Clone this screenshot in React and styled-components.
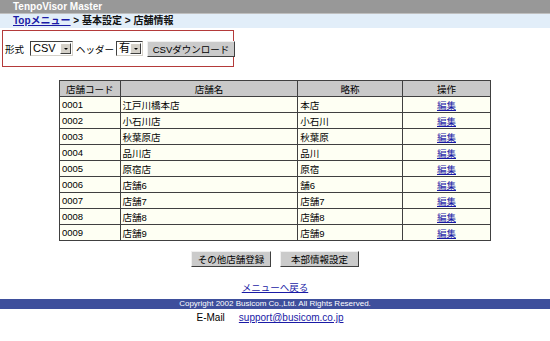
import React from 'react';
import styled, { createGlobalStyle } from 'styled-components';

const GlobalStyle = createGlobalStyle`
  html, body {
    margin: 0;
    padding: 0;
    background: #ffffff;
    font-family: "Liberation Sans", "Noto Sans CJK JP", sans-serif;
    font-size: 10px;
    color: #000;
  }
`;

const Page = styled.div`
  width: 550px;
  height: 341px;
  overflow: hidden;
`;

const TitleBar = styled.div`
  height: 13px;
  background: #989898;
  color: #fff;
  font-weight: bold;
  font-size: 10px;
  line-height: 13px;
  padding-left: 13px;
  border-bottom: 1px solid #bfbfbf;
`;

const Crumbs = styled.div`
  height: 14px;
  background: #e2eef9;
  line-height: 14px;
  padding-left: 13px;
  font-weight: bold;
  font-size: 10px;
  color: #111;
`;

const Link = styled.a`
  color: #1a1aa6;
  text-decoration: underline;
  cursor: pointer;
`;

const ExportBox = styled.div`
  margin: 2px 0 0 2px;
  width: 232px;
  height: 37px;
  border: 1px solid #b43a3a;
  display: flex;
  align-items: center;
  white-space: nowrap;
  padding-left: 2px;
  box-sizing: border-box;
`;

const Label = styled.span`
  font-size: 9.5px;
  flex-shrink: 0;
  margin-right: ${({ mr }) => mr || 0}px;
`;

const FakeSelect = styled.div`
  width: ${({ w }) => w}px;
  height: 15px;
  flex-shrink: 0;
  box-sizing: border-box;
  border: 1px solid #404040;
  border-right-color: #d4d0c8;
  border-bottom-color: #d4d0c8;
  background: #fff;
  display: flex;
  align-items: center;
  justify-content: space-between;
  padding-left: 2px;
  margin-right: ${({ mr }) => mr || 0}px;
  font-size: 11px;
  line-height: 13px;
`;

const Arrow = styled.span`
  width: 11px;
  height: 11px;
  margin-right: 1px;
  background: #d4d0c8;
  border: 1px solid #fff;
  border-right-color: #404040;
  border-bottom-color: #404040;
  box-sizing: border-box;
  display: flex;
  align-items: center;
  justify-content: center;
  &::after {
    content: '';
    border-left: 2px solid transparent;
    border-right: 2px solid transparent;
    border-top: 2px solid #000;
  }
`;

const Button = styled.button`
  width: ${({ w }) => w}px;
  height: 16px;
  flex-shrink: 0;
  padding: 0;
  background: #cbcbcb;
  border: 1px solid;
  border-color: #f0f0f0 #404040 #404040 #f0f0f0;
  font-family: inherit;
  font-size: 9.5px;
  color: #000;
  cursor: pointer;
  white-space: nowrap;
`;

const TableWrap = styled.div`
  display: flex;
  justify-content: center;
  margin-top: 13px;
`;

const Table = styled.table`
  width: 432px;
  border-collapse: collapse;
  border: 1px solid #404040;
  font-size: 9.5px;
`;

const Th = styled.th`
  height: 15px;
  padding: 0;
  background: #c9c9c9;
  border: 1px solid #404040;
  font-weight: normal;
  width: ${({ w }) => w}px;
`;

const Td = styled.td`
  height: 15px;
  padding: 0 2px;
  background: #fefff3;
  border: 1px solid #404040;
  text-align: ${({ center }) => (center ? 'center' : 'left')};
`;

const ButtonRow = styled.div`
  display: flex;
  justify-content: center;
  gap: 9px;
  margin-top: 10px;
`;

const BackLink = styled.div`
  text-align: center;
  margin-top: 13px;
  font-size: 9.5px;
`;

const Footer = styled.div`
  margin-top: 5px;
  height: 10px;
  background: #3e4f9c;
  color: #fff;
  font-size: 8px;
  line-height: 10px;
  text-align: center;
`;

const Mail = styled.div`
  text-align: center;
  margin-top: 3px;
  font-size: 10px;
  padding-right: 10px;
  & > span {
    margin-right: 14px;
  }
`;

const shops = [
  ['0001', '江戸川橋本店', '本店'],
  ['0002', '小石川店', '小石川'],
  ['0003', '秋葉原店', '秋葉原'],
  ['0004', '品川店', '品川'],
  ['0005', '原宿店', '原宿'],
  ['0006', '店舗6', '舗6'],
  ['0007', '店舗7', '店舗7'],
  ['0008', '店舗8', '店舗8'],
  ['0009', '店舗9', '店舗9'],
];

export default function App() {
  return (
    <Page>
      <GlobalStyle />
      <TitleBar>TenpoVisor Master</TitleBar>
      <Crumbs>
        <Link>Topメニュー</Link> &gt; 基本設定 &gt; 店舗情報
      </Crumbs>
      <ExportBox>
        <Label mr={6}>形式</Label>
        <FakeSelect w={43} mr={3}>
          CSV
          <Arrow />
        </FakeSelect>
        <Label mr={2}>ヘッダー</Label>
        <FakeSelect w={27} mr={4}>
          有
          <Arrow />
        </FakeSelect>
        <Button w={88}>CSVダウンロード</Button>
      </ExportBox>
      <TableWrap>
        <Table>
          <thead>
            <tr>
              <Th w={60}>店舗コード</Th>
              <Th w={179}>店舗名</Th>
              <Th w={105}>略称</Th>
              <Th w={88}>操作</Th>
            </tr>
          </thead>
          <tbody>
            {shops.map(([code, name, abbr]) => (
              <tr key={code}>
                <Td>{code}</Td>
                <Td>{name}</Td>
                <Td>{abbr}</Td>
                <Td center>
                  <Link>編集</Link>
                </Td>
              </tr>
            ))}
          </tbody>
        </Table>
      </TableWrap>
      <ButtonRow>
        <Button w={80}>その他店舗登録</Button>
        <Button w={79}>本部情報設定</Button>
      </ButtonRow>
      <BackLink>
        <Link>メニューへ戻る</Link>
      </BackLink>
      <Footer>Copyright 2002 Busicom Co.,Ltd. All Rights Reserved.</Footer>
      <Mail>
        <span>E-Mail</span>
        <Link>support@busicom.co.jp</Link>
      </Mail>
    </Page>
  );
}
